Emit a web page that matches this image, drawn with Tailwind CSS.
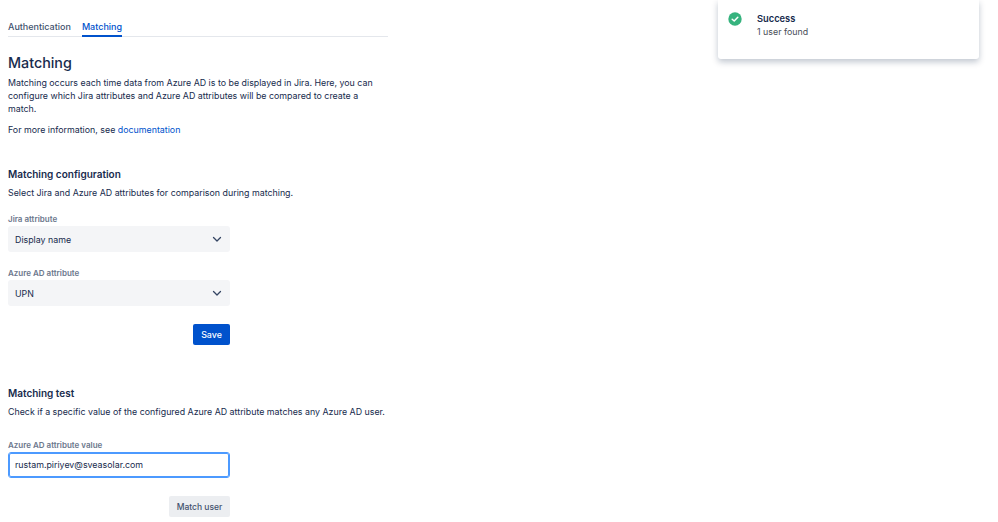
<!DOCTYPE html>
<html lang="en">
<head>
<meta charset="UTF-8">
<script src="https://cdn.jsdelivr.net/npm/@tailwindcss/browser@4"></script>
<title>Matching</title>
</head>
<body class="bg-white font-['Inter',sans-serif] text-[#172b4d] text-[8.85px] leading-[16px] overflow-hidden h-[522px] relative">
<div class="w-[380px] ml-2 pt-[19px]">
  <div class="flex gap-[11px] border-b border-[#e4e7ec] h-[18px] font-medium text-[9px]">
    <span class="text-[#42526e] h-[18px]">Authentication</span>
    <span class="text-[#0052cc] h-[18px] border-b-2 border-[#0052cc]">Matching</span>
  </div>
  <h1 class="text-[14.3px] leading-[24px] font-medium mt-[14px]">Matching</h1>
  <p class="mt-[1px] leading-[13px]">Matching occurs each time data from Azure AD is to be displayed in Jira. Here, you can configure which Jira attributes and Azure AD attributes will be compared to create a match.</p>
  <p class="mt-[8px] leading-[13px]">For more information, see <a class="text-[#0052cc]">documentation</a></p>

  <h2 class="text-[10px] leading-[16px] font-semibold mt-[30px]">Matching configuration</h2>
  <p class="mt-[4px] leading-[13px]">Select Jira and Azure AD attributes for comparison during matching.</p>

  <div class="w-[222px] mt-[14px]">
    <label class="block text-[8px] leading-[12px] font-semibold text-[#6b778c]">Jira attribute</label>
    <div class="mt-[1px] h-[26px] bg-[#f4f5f7] rounded-[3px] flex items-center justify-between pl-[7px] pr-[8px]">
      <span class="pt-[1px]">Display name</span>
      <svg width="10" height="7" viewBox="0 0 10 7" fill="none" stroke="#344563" stroke-width="1.3" stroke-linecap="round" stroke-linejoin="round"><path d="M1.5 1.5 5 5l3.5-3.5"/></svg>
    </div>
    <label class="block mt-[15px] text-[8px] leading-[12px] font-semibold text-[#6b778c]">Azure AD attribute</label>
    <div class="mt-[1px] h-[26px] bg-[#f4f5f7] rounded-[3px] flex items-center justify-between pl-[7px] pr-[8px]">
      <span class="pt-[1px]">UPN</span>
      <svg width="10" height="7" viewBox="0 0 10 7" fill="none" stroke="#344563" stroke-width="1.3" stroke-linecap="round" stroke-linejoin="round"><path d="M1.5 1.5 5 5l3.5-3.5"/></svg>
    </div>
    <div class="flex justify-end mt-[18px]">
      <button class="h-[21px] w-[37px] rounded-[2px] bg-[#0052cc] text-white font-medium">Save</button>
    </div>
  </div>

  <h2 class="text-[10px] leading-[16px] font-semibold mt-[40px]">Matching test</h2>
  <p class="mt-[4px] leading-[13px] whitespace-nowrap">Check if a specific value of the configured Azure AD attribute matches any Azure AD user.</p>

  <div class="w-[222px] mt-[21px]">
    <label class="block text-[8px] leading-[12px] font-semibold text-[#6b778c]">Azure AD attribute value</label>
    <div class="mt-[1px] h-[26px] border border-[#4c9aff] outline outline-[#4c9aff] -outline-offset-2 rounded-[3px] flex items-center pl-[6px]">rustam.piriyev@sveasolar.com</div>
    <div class="flex justify-end mt-[18px]">
      <button class="h-[21px] w-[61px] rounded-[2px] bg-[#eceef1] text-[#42526e] text-[8.5px] font-medium">Match user</button>
    </div>
  </div>
</div>

<div class="absolute left-[718px] top-0 w-[261px] h-[59px] bg-white rounded-b-[3px] shadow-[0_3px_6px_rgba(9,30,66,0.25)] flex pl-[10px] pt-[12px]">
  <svg width="14" height="14" viewBox="0 0 14 14"><circle cx="7" cy="7" r="6.7" fill="#36b37e"/><path d="M4.2 7.2 6.2 9l3.6-3.8" fill="none" stroke="#fff" stroke-width="1.5" stroke-linecap="round" stroke-linejoin="round"/></svg>
  <div class="ml-[15px]">
    <div class="font-semibold leading-[13px] text-[9.3px]">Success</div>
    <div class="leading-[13px] text-[#4a4f58]">1 user found</div>
  </div>
</div>
</body>
</html>
